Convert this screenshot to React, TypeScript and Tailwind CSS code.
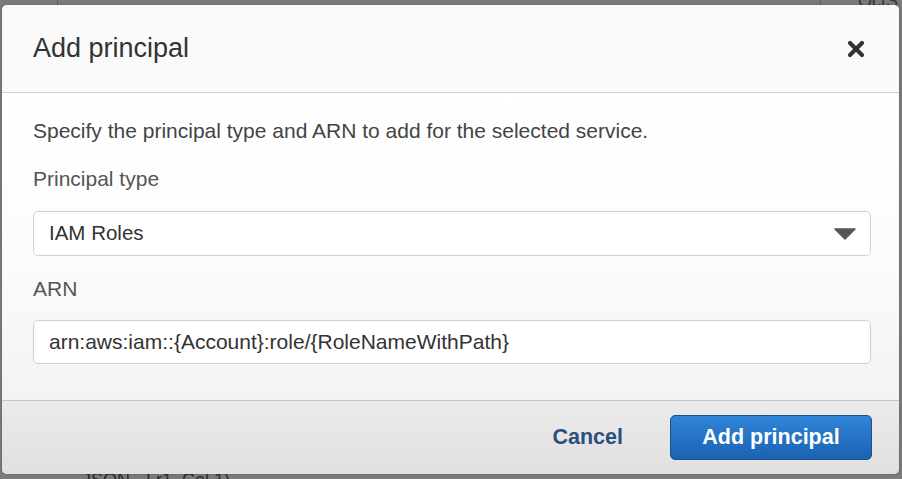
import React from "react";

export default function App() {
  return (
    <div
      className="relative w-[902px] h-[479px] overflow-hidden bg-[#7a7a7a]"
      style={{ fontFamily: '"Liberation Sans", Arial, sans-serif' }}
    >
      {/* faint background page bits */}
      <div className="absolute left-[57px] top-0 h-[6px] w-px bg-[#5e5e5e]" />
      <div className="absolute left-[820px] top-0 h-[6px] w-px bg-[#5e5e5e]" />
      <div className="absolute left-[858px] top-[-12px] text-[18px] text-[#333]">OctS</div>
      <div className="absolute left-[82px] top-[467px] text-[18px] text-[#2a2a2a]">JSON - Lr1, Col 1)</div>

      <div className="absolute left-[2px] top-[5px] w-[897px] h-[469px] rounded-[5px] overflow-hidden flex flex-col bg-white shadow-[0_0_2px_rgba(0,0,0,0.3)]">
        {/* header */}
        <div className="h-[88px] shrink-0 flex items-center justify-between pl-[31px] pr-[34px] bg-[#fafafa] border-b border-[#cfcfcf]">
          <h2 className="text-[27px] leading-none text-[#333]">Add principal</h2>
          <svg width="18" height="18" viewBox="0 0 18 18" className="mt-[1px]">
            <path d="M3 3 L15 15 M15 3 L3 15" stroke="#333" strokeWidth="4.2" strokeLinecap="round" />
          </svg>
        </div>

        {/* body */}
        <div className="flex-1 flex flex-col pl-[31px] pr-[28px] pt-[27px] bg-gradient-to-b from-[#ffffff] via-[#fcfcfc] to-[#f3f3f3]">
          <p className="text-[21px] leading-[22px] text-[#444]">
            Specify the principal type and ARN to add for the selected service.
          </p>
          <div className="mt-[26px] text-[21px] leading-[22px] text-[#555]">Principal type</div>
          <div className="mt-[21px] h-[45px] flex items-center justify-between pl-[15px] pr-[14px] rounded-[5px] border border-[#cfcfcf] bg-white">
            <span className="text-[20.5px] text-[#333]">IAM Roles</span>
            <svg width="22" height="12" viewBox="0 0 22 12">
              <path d="M1 1 L21 1 L11 11 Z" fill="#555" stroke="#555" strokeWidth="1.5" strokeLinejoin="round" />
            </svg>
          </div>
          <div className="mt-[22px] text-[21px] leading-[22px] text-[#555]">ARN</div>
          <div className="mt-[20px] h-[44px] flex items-center pl-[15px] rounded-[5px] border border-[#cfcfcf] bg-white">
            <span className="text-[21px] text-[#333]">arn:aws:iam::{"{Account}"}:role/{"{RoleNameWithPath}"}</span>
          </div>
        </div>

        {/* footer */}
        <div className="h-[74px] shrink-0 flex items-center justify-end pr-[27px] border-t border-[#c4c4c4] bg-gradient-to-b from-[#ebebeb] to-[#e0e0e0]">
          <button className="mr-[47px] text-[21.5px] font-bold text-[#2b4f7e]">Cancel</button>
          <button className="w-[202px] h-[45px] rounded-[5px] border border-[#1b4f8e] bg-gradient-to-b from-[#2f85d8] to-[#1b62b3] text-[21.5px] font-bold text-white">
            Add principal
          </button>
        </div>
      </div>
    </div>
  );
}
